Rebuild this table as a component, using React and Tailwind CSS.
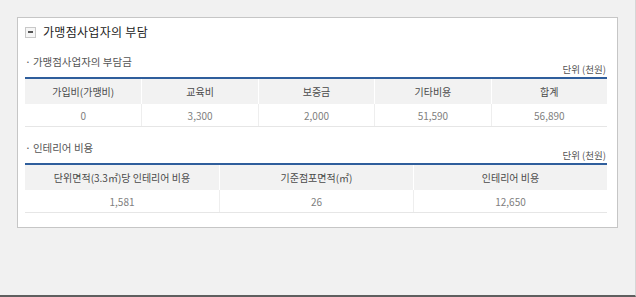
import React from 'react';

const burden = {
  heads: ['가입비(가맹비)', '교육비', '보증금', '기타비용', '합계'],
  values: ['0', '3,300', '2,000', '51,590', '56,890'],
};

const interior = {
  heads: ['단위면적(3.3㎡)당 인테리어 비용', '기준점포면적(㎡)', '인테리어 비용'],
  values: ['1,581', '26', '12,650'],
};

function SectionHead({ title }) {
  return (
    <div className="flex h-[20px] items-end justify-between">
      <p className="mb-[8px] text-[10.5px] leading-[14px] text-[#555]">
        <span className="mr-[2px]">·</span>
        {title}
      </p>
      <p className="pb-[2px] pr-[1px] text-[9.5px] leading-[12px] text-[#555]">단위 (천원)</p>
    </div>
  );
}

function CostTable({ heads, values }) {
  const cols = heads.length === 5 ? 'grid-cols-5' : 'grid-cols-3';
  return (
    <div className="border-t-2 border-[#2f5e9c]">
      <div className={`grid ${cols} h-[25px] bg-[#f2f2f2]`}>
        {heads.map((h, i) => (
          <div
            key={h}
            className={`flex items-center justify-center text-[10px] text-[#4a4a4a] ${i > 0 ? 'border-l border-white' : ''}`}
          >
            {h}
          </div>
        ))}
      </div>
      <div className={`grid ${cols} h-[23px] border-b border-[#e6e6e6] bg-white`}>
        {values.map((v, i) => (
          <div
            key={i}
            className={`flex items-center justify-center text-[10px] text-[#808080] ${i > 0 ? 'border-l border-[#eeeeee]' : ''}`}
          >
            {v}
          </div>
        ))}
      </div>
    </div>
  );
}

export default function App() {
  return (
    <div
      className="h-[297px] w-[636px] border-r border-b-2 border-r-[#d6d6d6] border-b-[#5f5f5f] bg-[#f1f1f1] pl-[17px] pt-[17px]"
      style={{ fontFamily: '"Noto Sans CJK KR", "Noto Sans", sans-serif' }}
    >
      <div className="h-[211px] w-[601px] border border-[#c6c6c6] bg-white pl-[7px] pr-[10px] pt-[7px]">
        <div className="flex h-[14px] items-center gap-[7px]">
          <span className="flex h-[11px] w-[11px] items-center justify-center border border-[#c8c8c8] bg-[#f6f6f6]">
            <span className="h-[2px] w-[5px] bg-[#555]" />
          </span>
          <h2 className="text-[12px] leading-[14px] tracking-[0.3px] text-[#222]">가맹점사업자의 부담</h2>
        </div>

        <div className="mt-[18px]">
          <SectionHead title="가맹점사업자의 부담금" />
          <CostTable {...burden} />
        </div>

        <div className="mt-[16px]">
          <SectionHead title="인테리어 비용" />
          <CostTable {...interior} />
        </div>
      </div>
    </div>
  );
}
